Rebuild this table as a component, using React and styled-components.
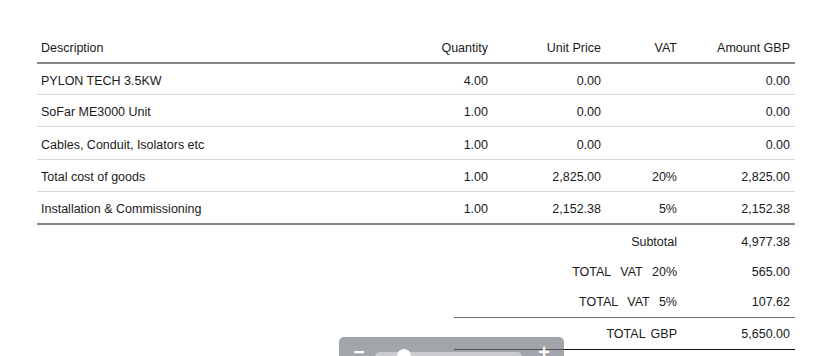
import React from "react";
import styled, { createGlobalStyle } from "styled-components";

const GlobalStyle = createGlobalStyle`
  html, body {
    margin: 0;
    padding: 0;
    background: #ffffff;
  }
  body {
    font-family: "Liberation Sans", Arial, sans-serif;
    color: #1a1a1a;
    overflow: hidden;
  }
`;

const items = [
  { desc: "PYLON TECH 3.5KW", qty: "4.00", price: "0.00", vat: "", amount: "0.00" },
  { desc: "SoFar ME3000 Unit", qty: "1.00", price: "0.00", vat: "", amount: "0.00" },
  { desc: "Cables, Conduit, Isolators etc", qty: "1.00", price: "0.00", vat: "", amount: "0.00" },
  { desc: "Total cost of goods", qty: "1.00", price: "2,825.00", vat: "20%", amount: "2,825.00" },
  { desc: "Installation & Commissioning", qty: "1.00", price: "2,152.38", vat: "5%", amount: "2,152.38" },
];

const totals = [
  { label: "Subtotal", value: "4,977.38", spacing: 0 },
  { label: "TOTAL VAT 20%", value: "565.00", spacing: 6 },
  { label: "TOTAL VAT 5%", value: "107.62", spacing: 6 },
];

const App = () => {
  return (
    <Page>
      <GlobalStyle />
      <Table>
        <HeadRow>
          <Cell>Description</Cell>
          <Cell $num>Quantity</Cell>
          <Cell $num>Unit Price</Cell>
          <Cell $num>VAT</Cell>
          <Cell $num>Amount GBP</Cell>
        </HeadRow>
        {items.map((item, i) => (
          <BodyRow
            key={item.desc}
            $first={i === 0}
            $last={i === items.length - 1}
          >
            <Cell>{item.desc}</Cell>
            <Cell $num>{item.qty}</Cell>
            <Cell $num>{item.price}</Cell>
            <Cell $num>{item.vat}</Cell>
            <Cell $num>{item.amount}</Cell>
          </BodyRow>
        ))}
      </Table>

      <Totals>
        {totals.map((t) => (
          <TotalRow key={t.label}>
            <TotalLabel $spacing={t.spacing}>{t.label}</TotalLabel>
            <TotalValue>{t.value}</TotalValue>
          </TotalRow>
        ))}
        <GrandRow>
          <TotalLabel $spacing={2}>TOTAL GBP</TotalLabel>
          <TotalValue>5,650.00</TotalValue>
        </GrandRow>
      </Totals>

      <ZoomBar>
        <ZoomButton>−</ZoomButton>
        <Track>
          <Thumb />
        </Track>
        <ZoomButton>+</ZoomButton>
      </ZoomBar>
    </Page>
  );
};

const Page = styled.div`
  position: relative;
  width: 832px;
  height: 356px;
  padding: 32px 37px 0 37px;
  box-sizing: border-box;
  font-size: 12.5px;
`;

const Table = styled.div`
  display: flex;
  flex-direction: column;
  width: 758px;
`;

const rowColumns = "1fr 70px 113px 76px 113px";

const HeadRow = styled.div`
  display: grid;
  grid-template-columns: ${rowColumns};
  align-items: center;
  box-sizing: border-box;
  height: 32px;
  padding-top: 1px;
  border-bottom: 2px solid #858585;
`;

// heights include padding and border
const BodyRow = styled.div`
  display: grid;
  grid-template-columns: ${rowColumns};
  align-items: center;
  box-sizing: border-box;
  height: ${(p) => (p.$first ? "31px" : p.$last ? "33px" : "32.4px")};
  padding-top: 3px;
  border-bottom: ${(p) => (p.$last ? "2px solid #858585" : "1px solid #d6d6d6")};
`;

const Cell = styled.div`
  text-align: ${(p) => (p.$num ? "right" : "left")};
  padding: ${(p) => (p.$num ? "0 5px 0 0" : "0 0 0 4px")};
  white-space: nowrap;
`;

const Totals = styled.div`
  display: flex;
  flex-direction: column;
  width: 341px;
  margin-left: 417px;
  padding-top: 2px;
`;

const TotalRow = styled.div`
  display: grid;
  grid-template-columns: 1fr 118px;
  align-items: center;
  height: 30px;
`;

const GrandRow = styled(TotalRow)`
  height: 31px;
  border-top: 1.5px solid #6e6e6e;
  border-bottom: 1.5px solid #111111;
`;

const TotalLabel = styled.div`
  text-align: right;
  white-space: nowrap;
  word-spacing: ${(p) => p.$spacing}px;
`;

const TotalValue = styled.div`
  text-align: right;
  padding-right: 5px;
`;

const ZoomBar = styled.div`
  position: absolute;
  left: 339px;
  top: 337px;
  width: 225px;
  height: 34px;
  border-radius: 5px;
  background: rgba(110, 114, 120, 0.64);
  display: flex;
  align-items: flex-start;
  padding: 9px 12px 0 12px;
  box-sizing: border-box;
`;

const ZoomButton = styled.div`
  width: 16px;
  color: #ffffff;
  font-size: 20px;
  font-weight: bold;
  line-height: 12px;
  text-align: center;
`;

const Track = styled.div`
  position: relative;
  flex: 1;
  height: 14px;
  margin: 6px 14px 0 8px;
  border-radius: 5px;
  background: #c9cbce;
`;

const Thumb = styled.div`
  position: absolute;
  left: 22px;
  top: -3px;
  width: 14px;
  height: 14px;
  border-radius: 50%;
  background: #ffffff;
`;

export default App;
